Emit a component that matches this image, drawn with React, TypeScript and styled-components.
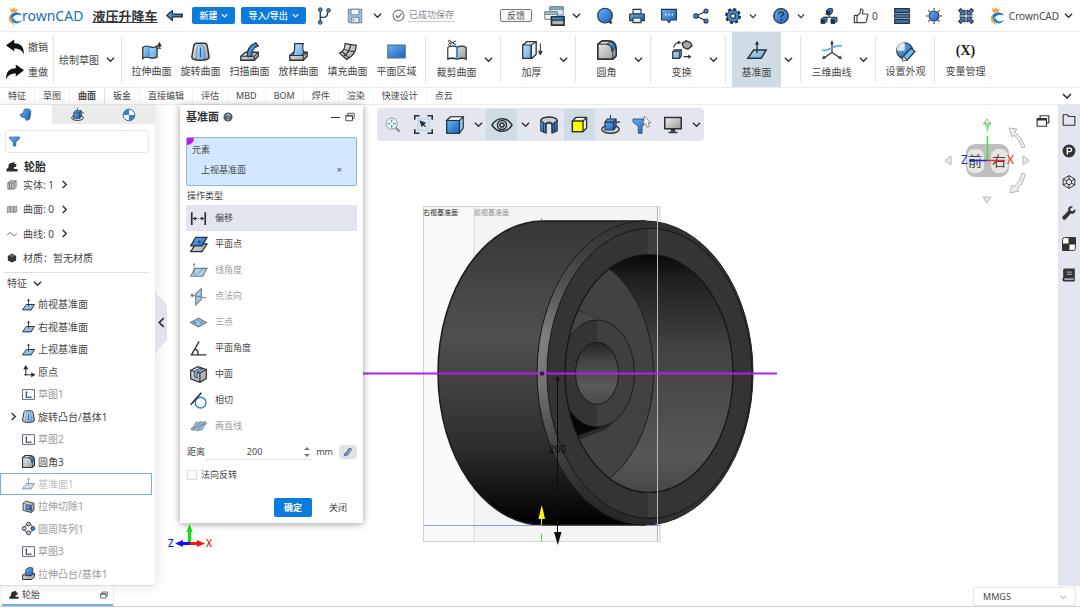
import React from "react";
import styled, { createGlobalStyle, css } from "styled-components";

const GlobalStyle = createGlobalStyle`
  *, *::before, *::after { box-sizing: border-box; }
  body {
    margin: 0;
    background: #fff;
    color: #484848;
    font-family: "Noto Sans", "Noto Sans CJK SC", sans-serif;
    font-size: 10px;
    line-height: 14px;
  }
  button, input, select {
    margin: 0;
    padding: 0;
    border: 0;
    background: none;
    color: inherit;
    font: inherit;
  }
  button { cursor: pointer; white-space: nowrap; }
  svg { display: block; flex: none; }
  h1, h2, p, ul { margin: 0; padding: 0; font: inherit; }
  ul { list-style: none; }
`;

/* ---------- icons ---------- */

const K = "#2c3138";
const B = "url(#blue)";
const L = "url(#lightBlue)";
const G = "url(#grey)";

const Gradients = () => (
  <svg width="0" height="0" aria-hidden="true">
    <defs>
      <linearGradient id="blue" x1="0" y1="0" x2="1" y2="1">
        <stop offset="0" stopColor="#64b4f2" />
        <stop offset="1" stopColor="#1c5fc0" />
      </linearGradient>
      <linearGradient id="lightBlue" x1="0" y1="0" x2="1" y2="1">
        <stop offset="0" stopColor="#c4e6fb" />
        <stop offset="1" stopColor="#5ba6e4" />
      </linearGradient>
      <linearGradient id="grey" x1="0" y1="0" x2="1" y2="1">
        <stop offset="0" stopColor="#eeeeee" />
        <stop offset="1" stopColor="#9b9b9b" />
      </linearGradient>
    </defs>
  </svg>
);

const plane = (
  <>
    <path d="M8 12h15l-6 10H1z" fill={L} stroke={K} strokeWidth="1.8" />
    <path d="M12 16V3" stroke={K} strokeWidth="1.6" />
    <path d="M9.500 5.500L12 1l2.500 4.500z" fill={K} />
  </>
);

const icons: Record<string, React.ReactNode> = {
  back: <path d="M1 12l8-7v5h14v4H9v5z" fill={B} stroke={K} strokeWidth="1.700" strokeLinejoin="round" />,
  branch: (
    <g fill="none" stroke={K} strokeWidth="1.800">
      <path d="M7 5v15M7 14c8 0 10-1 10-8" />
      <g fill="#3c8fdc" strokeWidth="1.200">
        <circle cx="7" cy="3.500" r="2.500" /><circle cx="7" cy="20.500" r="2.500" /><circle cx="18" cy="4.500" r="2.500" />
      </g>
    </g>
  ),
  save: (
    <g stroke="#7b8794" strokeWidth="1.600">
      <path d="M2 2h20v20H4l-2-2z" fill="#9cc3e6" />
      <path d="M6 2h12v8H6z" fill="#f2f5f8" /><path d="M7 14h11v8H7z" fill="#e6ebf0" /><path d="M10 16v4" />
    </g>
  ),
  check: (
    <g fill="none" stroke="#707a85" strokeWidth="2">
      <circle cx="12" cy="12" r="10" /><path d="M7 12l4 4 7-8" strokeWidth="2.500" />
    </g>
  ),
  windows: (
    <g stroke="#6d8190" strokeWidth="1.200">
      <path d="M7 1h16v10H7z" fill="#dbeaf3" /><path d="M7 1h16v3H7z" fill="#8fb6cc" />
      <path d="M1 7h15v9H1z" fill="#eef6fa" /><path d="M1 7h15v3H1z" fill="#a8cbdd" />
      <path d="M9 13h15v10H9z" fill="#b4b4b4" stroke={K} strokeWidth="2" /><path d="M9 13h15v4H9z" fill="#3d8fdc" stroke={K} strokeWidth="1.500" />
    </g>
  ),
  ball: (
    <>
      <path d="M17 18l5 5" stroke={K} strokeWidth="3.500" /><circle cx="12" cy="11.500" r="11" fill={B} stroke={K} strokeWidth="1.600" />
    </>
  ),
  print: (
    <g stroke={K} strokeWidth="1.700" strokeLinejoin="round">
      <path d="M6 2h12v7H6z" fill="#e9eef2" /><path d="M1 9h22v10H1z" fill={B} /><path d="M6 15h12v7H6z" fill="#e4e8ec" />
    </g>
  ),
  chat: (
    <>
      <path d="M1 2h22v16h-8l-3 4-3-4H1z" fill={B} stroke={K} strokeWidth="1.700" /><path d="M6 10h2M11 10h2M16 10h2" stroke="#fff" strokeWidth="2.400" />
    </>
  ),
  share: (
    <g stroke={K} strokeWidth="1.700">
      <path d="M19 5L5 12l14 7" fill="none" />
      <g fill="#3c8fdc"><circle cx="19.500" cy="4.500" r="3" /><circle cx="4.500" cy="12" r="3.300" /><circle cx="19.500" cy="19.500" r="3" /></g>
    </g>
  ),
  gear: (
    <g stroke={K}>
      <circle cx="12" cy="12" r="10" fill="none" strokeWidth="4" strokeDasharray="4.500 3.354" />
      <circle cx="12" cy="12" r="9" fill="#3a8edc" strokeWidth="1.500" />
      <circle cx="12" cy="12" r="3.600" fill="#fff" strokeWidth="1.800" />
    </g>
  ),
  help: (
    <>
      <circle cx="12" cy="12" r="11" fill={B} stroke={K} strokeWidth="1.800" />
      <path d="M8.500 9.500c0-5 7-4.500 7-.5 0 2.500-3.500 2.500-3.500 5" fill="none" stroke={K} strokeWidth="2" /><circle cx="12" cy="17.500" r="1.300" fill={K} />
    </>
  ),
  org: (
    <>
      <path d="M12 9v5M5 17v-3h14v3" fill="none" stroke={K} strokeWidth="1.600" />
      <g fill="#3583d6" stroke={K} strokeWidth="1.500">
        <path d="M8 4l3-3h6v6l-3 3H8z" /><path d="M0 17l3-3h6v6l-3 3H0z" /><path d="M15 17l3-3h6v6l-3 3h-6z" />
      </g>
      <path d="M8 4h6v6H8zM0 17h6v6H0zM15 17h6v6h-6z" fill={K} />
    </>
  ),
  thumb: (
    <path d="M2 11h4v11H2zM6 12l5-5V2.500c0-1.500 4-1.500 4 1.500 0 2-1 4-1 5h6.500c2 0 2 2 1.500 3l-2 8c-.5 1.500-1 2-2.500 2H6" fill="none" stroke="#444" strokeWidth="1.800" strokeLinejoin="round" />
  ),
  bars: (
    <g fill="#3279bd" stroke={K} strokeWidth="1.800">
      <path d="M1 1h22v5.500H1zM1 9.300h22v5.500H1zM1 17.500h22V23H1z" />
    </g>
  ),
  sun: (
    <g stroke={K} strokeWidth="1.600">
      <path d="M12 0v24M0 12h24M3.500 3.500l17 17M20.500 3.500l-17 17" /><circle cx="12" cy="12" r="8" fill={B} stroke="#fff" strokeWidth="2.500" />
      <circle cx="12" cy="12" r="7.500" fill={B} />
    </g>
  ),
  collapse: (
    <g fill="#3a86d2" stroke={K} strokeWidth="1.700" strokeLinejoin="round">
      <path d="M10.500 10.500V3L8 5 4 1 1 4l4 4-2 2.500z" /><path d="M13.500 10.500V3L16 5l4-4 3 3-4 4 2 2.500z" />
      <path d="M10.500 13.500V21L8 19l-4 4-3-3 4-4-2-2.500z" /><path d="M13.500 13.500V21l2.500-2 4 4 3-3-4-4 2-2.500z" />
    </g>
  ),
  crown: (
    <>
      <path d="M3-2l4 3 3-4 3 4 4-2-3 7H5z" fill="#f7a535" />
      <path d="M23 9C14 3 3 7 3 16c0 2 .5 4 2 6 1-7 5-11 11-12 3-.5 5 0 7 1z" fill="#1677c8" />
      <path d="M6 20c5 7 14 6 18-1-6 4-12 3-14-3-3 0-4 2-4 4z" fill="#1b86d6" />
      <path d="M2 12c-2 8 2 14 11 15C7 24 4 19 5 11z" fill="#f7a535" />
    </>
  ),
  undo: <path d="M0 9.500L11 2v5c8 0 13 4 13 15-2-5-6-8-13-8v4z" fill="#111" />,
  redo: <path d="M24 9.500L13 2v5C5 7 0 11 0 22c2-5 6-8 13-8v4z" fill="#111" />,
  extrude: (
    <>
      <path d="M1 7c6-6 10 4 18-2v14c-8 5-12-4-18 2z" fill={L} stroke={K} strokeWidth="1.700" /><path d="M3 7c3-3 5-2 7 0v11c-3-1-5-1-7 1z" fill={B} opacity=".5" />
      <path d="M19 8h5M22 2v6M20 5l2-4 2 4z" fill={K} stroke={K} strokeWidth="1.300" />
    </>
  ),
  revolve: (
    <>
      <path d="M7 1.500h10c2 0 3 1.500 3.500 3.500L23 19c0 2.500-5 4-11 4S1 21.500 1 19L3.500 5C4 3 5 1.500 7 1.500z" fill={G} stroke={K} strokeWidth="1.800" />
      <path d="M8 5c2-1.500 6-1.500 8 0l2 16c-4 1.500-8 1.500-12 0z" fill={L} stroke="#5d7f9e" /><path d="M12 7v12" stroke="#1c5fc0" strokeWidth="1.600" />
    </>
  ),
  sweep: (
    <>
      <path d="M1 18l6-5h16v5l-5 5H1z" fill={G} stroke={K} strokeWidth="1.700" /><path d="M1 18h17v5M18 18l5-5" fill="none" stroke={K} strokeWidth="1.300" />
      <path d="M9 17c0-9 4-13 11-16l3 4c-6 2-8 5-8 12-1 2-5 2-6 0z" fill={B} stroke={K} strokeWidth="1.600" />
    </>
  ),
  loft: (
    <>
      <path d="M1 17l5-4h17v5l-5 5H1z" fill={G} stroke={K} strokeWidth="1.700" /><path d="M1 17h17v6M18 17l5-4" fill="none" stroke={K} strokeWidth="1.300" />
      <path d="M7 2h11c-2 6 0 9 1 12l-3 3H5c2-5 3-9 2-15z" fill={L} stroke={K} strokeWidth="1.400" />
    </>
  ),
  fill: (
    <g stroke={K} strokeWidth="1.500">
      <path d="M9 2c5 1 9 2 14 2 0 9-4 14-12 18L2 14c5-2 7-6 7-12z" fill={G} /><path d="M16 3c-1 8-4 12-9 15M8 9c4 3 8 3 13 3M5 12l9 8" fill="none" />
    </g>
  ),
  region: <path d="M1 4h22v16H1z" fill={B} stroke="#4d6d8c" strokeWidth="1.400" />,
  trim: (
    <>
      <path d="M1 9c4-2 8-2 11 0 4-2 8-2 11 0v14c-4-2-8-1-11 0-3-1-7-2-11 0z" fill={G} stroke={K} strokeWidth="1.500" /><path d="M2 9c3-1 6-1 9 0v12c-3-1-6-1-9 0z" fill="#fff" />
      <path d="M12 7v16" stroke="#2e7fd6" strokeWidth="2" /><path d="M3 1l8 5M3 5l8-4" stroke={K} strokeWidth="1.200" />
      <circle cx="3" cy="1.500" r="1.300" fill="#fff" stroke={K} /><circle cx="3" cy="5.500" r="1.300" fill="#fff" stroke={K} />
    </>
  ),
  thicken: (
    <>
      <path d="M1 6l5-4h11v15l-5 5H1z" fill="#eceff1" stroke={K} strokeWidth="1.600" /><path d="M1 6h10v16H1z" fill={L} stroke={K} strokeWidth="1.300" />
      <path d="M11 6l6-4M11 22V6" stroke={K} strokeWidth="1.300" /><path d="M22 4v12M20 13.500l2 4.500 2-4.500z" stroke={K} strokeWidth="1.200" fill={K} />
    </>
  ),
  fillet: (
    <>
      <path d="M1 5l5-4h8c6 0 9 4 9 9v9l-4 4H1z" fill={G} stroke={K} strokeWidth="2" strokeLinejoin="round" />
      <path d="M12 5l4-3c4 1 6 4 6 8l-4 4c0-5-2-8-6-9z" fill={B} stroke={K} strokeWidth="1.200" /><path d="M1 5h11c5 1 7 5 7 9v9" fill="none" stroke={K} strokeWidth="1.200" />
    </>
  ),
  transform: (
    <>
      <path d="M1 14l2-2h8v7l-2 3H1z" fill={L} stroke={K} strokeWidth="1.600" /><path d="M1 14h8v8M9 14l2-2" fill="none" stroke={K} />
      <path d="M12 4l5-3 5 2 2 4-5 4-5-2z" fill="#aaa" stroke={K} strokeWidth="1.600" />
      <path d="M2 9c1-4 3-6 7-6M14 20h7" fill="none" stroke={K} strokeWidth="1.400" />
      <path d="M7 .5l4 2.500-4 2.500zM19.500 17.500l4 2.500-4 2.500z" fill={K} />
    </>
  ),
  plane,
  curve3d: (
    <>
      <path d="M12 2v13L3 21M12 15l9 6" fill="none" stroke={K} strokeWidth="1.500" /><path d="M10 5l2-5 2 5zM0 23l2-4.500 3 3.500zM24 23l-2-4.500-3 3.500z" fill={K} />
      <path d="M0 12c8 3 12-7 24-5" fill="none" stroke="#51b1ee" strokeWidth="2" />
    </>
  ),
  appearance: (
    <>
      <circle cx="11" cy="11" r="10" fill={B} stroke={K} strokeWidth="1.600" /><path d="M11 1v10H1C1 5 5 1 11 1z" fill="#dceaf4" />
      <path d="M9 18L19 8l5 4-10 11z" fill="#6ebcf0" stroke={K} strokeWidth="1.500" /><path d="M9 18l5 5-6 1z" fill="#fff" stroke={K} />
    </>
  ),
  part: (
    <>
      <path d="M2 12l6-3 2-7h9l3 4-2 14-6 3-4-6H5z" fill={B} stroke="#2d5d8f" strokeWidth="1.500" strokeLinejoin="round" />
      <path d="M14 5l5 3-1 13" fill="none" stroke="#2d5d8f" strokeWidth="1.300" />
    </>
  ),
  orbit: (
    <>
      <ellipse cx="12" cy="18" rx="11" ry="5" fill="#d5dbe0" stroke={K} strokeWidth="1.700" />
      <path d="M5 9l3-4h11v10l-3 4H5z" fill={B} stroke={K} strokeWidth="1.400" /><path d="M5 9h11v10M16 9l3-4M12 5V0M19 9h5" fill="none" stroke={K} strokeWidth="1.300" />
    </>
  ),
  globe: (
    <>
      <circle cx="12" cy="12" r="10" fill="#fff" stroke="#37577c" strokeWidth="1.500" /><path d="M12 2a10 10 0 0 0-10 10h10zM12 22a10 10 0 0 0 10-10H12z" fill="#2f7ed8" />
    </>
  ),
  funnel: <path d="M1 2h22v4l-8 7v9H9v-9L1 6z" fill={B} stroke="#35618f" strokeWidth="1.300" />,
  tire: <path d="M1 21v-5l4-3V8c2-5 8-4 12-6v4h4l-1 6h-4v4h7v5z" fill="#2e2e2e" />,
  cube: (
    <g fill="#c8c8c8" stroke="#666" strokeWidth="1.800"><path d="M2 7l5-5h15v15l-5 5H2z" /><path d="M2 7h15v15M17 7l5-5M6 7v15M11 7v15" fill="none" /></g>
  ),
  surface: <path d="M1 7c6-5 12 3 22-2v14c-9 4-15-3-22 2zM8 5v14M16 6v14" fill="#bbb" stroke="#666" strokeWidth="1.500" />,
  line: <path d="M1 15c5-10 9-5 11-2s6 6 11-3" fill="none" stroke="#555" strokeWidth="2" />,
  material: (
    <>
      <path d="M12 1l10 6v11l-10 5-10-5V7z" fill="#333" /><path d="M8 6l4 2 4-2" fill="none" stroke="#eee" strokeWidth="1.500" />
    </>
  ),
  origin: <path d="M7 20V5M4 7l3-5 3 5zM4 18h16M18 15l5 3-5 3z" fill={K} stroke={K} strokeWidth="2" />,
  sketch: (
    <g fill="none" stroke="#5d656d" strokeWidth="1.800"><path d="M1 3h22v18H1z" /><path d="M8 7v10h9" stroke="#333" strokeWidth="2" /><path d="M6 8h4M16 15v4" stroke="#2f7ed8" strokeWidth="2.500" /></g>
  ),
  cut: (
    <>
      <path d="M2 6l5-4 15 4v13l-5 4-15-4z" fill={G} stroke={K} strokeWidth="1.700" /><path d="M7 9l10 2v8L7 17z" fill={B} stroke={K} /><path d="M2 6l15 4v13M17 10l5-4" fill="none" stroke={K} />
    </>
  ),
  pattern: (
    <g stroke={K} strokeWidth="1.800" fill="#d0d4d8"><circle cx="12" cy="12" r="8" fill="none" /><circle cx="12" cy="4" r="3.500" /><circle cx="4" cy="12" r="3.500" /><circle cx="12" cy="20" r="3.500" /><circle cx="20" cy="12" r="3.500" fill="#3c8fdc" /></g>
  ),
  boss: (
    <>
      <path d="M1 15l5-3h17v6l-5 5H1z" fill={G} stroke={K} strokeWidth="1.800" /><path d="M7 13V5c2-4 10-5 13-3v10l-3 4H7z" fill={B} stroke={K} strokeWidth="1.500" /><path d="M1 16h17l5-4" fill="none" stroke={K} />
    </>
  ),
  offset: (
    <>
      <path d="M2.500 3v18M21.500 3v18" stroke={K} strokeWidth="2.400" /><path d="M4 12h16" stroke={K} strokeWidth="1.600" strokeDasharray="6 1.500 1 1.500" />
      <path d="M4 12l4-3v6zM20 12l-4-3v6z" fill={K} />
    </>
  ),
  planePoint: (
    <>
      <path d="M8 11h16l-7 11H1z" fill={G} stroke={K} strokeWidth="1.800" /><path d="M8 2h16l-7 12H1z" fill={B} stroke={K} strokeWidth="1.800" /><circle cx="13" cy="8" r="1.500" fill={K} />
    </>
  ),
  lineAngle: (
    <>
      <path d="M7 9h17l-6 11H1z" fill="#a9d3f1" stroke="#707a84" strokeWidth="1.500" /><path d="M6 18V3M8 18l11-8" fill="none" stroke="#707a84" /><circle cx="6" cy="3" r="1.300" fill="#707a84" />
    </>
  ),
  pointNormal: (
    <>
      <path d="M8 8l8-7v15l-8 8z" fill="#9accef" stroke="#707a84" strokeWidth="1.500" /><path d="M1 10l22 4M1 10l4-2M1 10l3 3" fill="none" stroke="#707a84" strokeWidth="1.500" />
    </>
  ),
  threePoint: (
    <>
      <path d="M1 12l11-6 11 6-11 6z" fill="#8fc6ee" stroke="#707a84" strokeWidth="1.700" /><path d="M6 12h2M15 12h2M12 10v-1" stroke="#37577c" strokeWidth="2" />
    </>
  ),
  angle: <path d="M13 2L2 21h21M7 13c3 1 5 4 4 8" fill="none" stroke={K} strokeWidth="1.900" />,
  midplane: (
    <g stroke={K} strokeWidth="1.700"><path d="M1 6l10-5 12 4v13l-9 5-13-5z" fill={G} /><path d="M1 6l13 4v13M14 10l9-5" fill="none" /><path d="M6 8l8-5 4 1-8 5v8l-4-2z" fill="#71baf0" strokeWidth="1.200" /></g>
  ),
  tangent: (
    <>
      <circle cx="15" cy="15" r="7.500" fill="none" stroke="#2f7ed8" strokeWidth="2" /><path d="M1 18L16 1" stroke={K} strokeWidth="2.400" />
    </>
  ),
  twoLine: (
    <>
      <path d="M8 6h15l-6 11H2z" fill="#8dbce0" stroke="#8b959e" strokeWidth="1.400" /><path d="M0 15l24-7M4 18L16 4M10 19L21 4" stroke="#7c8791" strokeWidth="1.300" />
    </>
  ),
  measure: (
    <>
      <path d="M6 21c-4 0-4-6 1-6l8-12 6 2-9 14z" fill="#3c8fdc" stroke={K} strokeWidth="1.500" /><path d="M9 20L20 4" stroke="#fff" strokeWidth="1.500" />
    </>
  ),
  infoHelp: (
    <>
      <circle cx="12" cy="12" r="11" fill="#58626d" /><path d="M8.500 9.500c0-5 7-4.500 7-.5 0 2.500-3.500 2.500-3.500 5" fill="none" stroke="#fff" strokeWidth="2" /><circle cx="12" cy="17.500" r="1.500" fill="#fff" />
    </>
  ),
  restore: <path d="M7 8V3h15v12h-4M2 8h16v13H2zM2 10h16" fill="none" stroke="#333" strokeWidth="2" />,
  zoomIn: (
    <>
      <path d="M15 15l7 7" stroke="#8e959b" strokeWidth="3.500" /><circle cx="10" cy="10" r="8.500" fill="#e9f4f4" stroke="#8e9da3" strokeWidth="1.500" /><path d="M10 4v4M10 12v4M4 10h4M12 10h4" stroke="#5b9d9d" strokeWidth="2" />
    </>
  ),
  fit: (
    <>
      <path d="M1 6V1h6M17 1h6v5M23 18v5h-6M7 23H1v-5" fill="none" stroke={K} strokeWidth="2" /><path d="M5 5h14v14H5z" fill="none" stroke="#76b7ea" strokeDasharray="2 1.500" />
      <path d="M8 8l6 2-4 4zM10 10l5 5" fill={K} stroke={K} strokeWidth="1.500" />
    </>
  ),
  blueCube: (
    <g stroke={K} strokeWidth="1.600"><path d="M1 6l5-5h17v15l-5 7H1z" fill="#8dd0f6" /><path d="M1 6l5-5h17l-5 5z" fill="#f2f4f5" /><path d="M1 6h17v17H1z" fill={B} /></g>
  ),
  eye: (
    <g fill="none" stroke={K} strokeWidth="1.800"><path d="M0 12c6-10 18-10 24 0-6 10-18 10-24 0z" /><circle cx="12" cy="12" r="5.500" /><circle cx="12" cy="12" r="2.500" /></g>
  ),
  section: (
    <g stroke={K} strokeWidth="1.400"><path d="M1 6c2-6 20-6 22 0v14l-7 3V12c-1-3-7-3-8 0v11l-7-3z" fill={B} /><path d="M1 6c2-6 20-6 22 0l-6 5c-2-4-8-4-10 0z" fill="#c9cdd1" /><path d="M8 11v11M16 11v11M4.500 9v12M19.500 9v12" /></g>
  ),
  yellowCube: (
    <g stroke={K} strokeWidth="1.900" strokeLinejoin="round"><path d="M2 7l5-5h15v15l-5 5H2z" fill="#f5f5d8" /><path d="M2 7h15v15H2z" fill="#ff0" /><path d="M17 7l5-5" /></g>
  ),
  funnelCursor: (
    <>
      <path d="M0 4h18v4l-6 6v9H7v-9L0 8z" fill={B} stroke="#37577c" strokeWidth="1.300" /><path d="M15 0l9 9h-4l2 5-3 1-2-5-3 3z" fill="#fff" stroke="#666" />
    </>
  ),
  monitor: (
    <>
      <path d="M1 2h22v15H1z" fill={G} stroke={K} strokeWidth="2" /><path d="M9 17h6v4H9z" fill={K} /><path d="M6 22h12" stroke={K} strokeWidth="2" />
    </>
  ),
  folder: <path d="M2 3h7l3 3h10v15H2z" fill="none" stroke="#333" strokeWidth="1.900" strokeLinejoin="round" />,
  parking: (
    <>
      <circle cx="12" cy="12" r="11" fill="#333" /><path d="M9 18V7h4.500c4 0 4 6 0 6H9" fill="none" stroke="#fff" strokeWidth="2.300" />
    </>
  ),
  hex: (
    <g fill="none" stroke="#333" strokeWidth="1.700"><path d="M12 1l10 6v10l-10 6-10-6V7z" /><circle cx="12" cy="12" r="4.500" /><path d="M12 1v6M12 17v6M2 7l6 3M16 14l6 3M22 7l-6 3M8 14l-6 3" /></g>
  ),
  wrench: <path d="M23 5l-5 4-3-1-1-3 5-4c-5-2-10 2-8 7L1 18c-2 3 2 7 5 5l9-10c6 1 9-3 8-8z" fill="#333" />,
  checker: (
    <g stroke="#333" strokeWidth="1.700"><rect x="1" y="1" width="22" height="22" rx="3" fill="#fff" /><path d="M12 1h11v11H12zM1 12h11v11H1z" fill="#333" /></g>
  ),
  book: (
    <>
      <path d="M4 1h18v22H4c-4 0-4-5-2-6V4c0-2 1-3 2-3z" fill="#333" /><path d="M4 19h16" stroke="#e3e6ee" strokeWidth="2" /><path d="M8 7h9M8 11h9" stroke="#999" strokeWidth="2" />
    </>
  ),
};

const Icon = ({ name, size = 16 }: { name: string; size?: number }) => (
  <svg width={size} height={size} viewBox="0 0 24 24" aria-hidden="true" overflow="visible">
    {icons[name]}
  </svg>
);

const turns = { down: 0, right: -90, left: 90 };
const Chevron = ({ dir = "down", size = 8, color = "#333" }: { dir?: keyof typeof turns; size?: number; color?: string }) => (
  <svg width={size} height={size} viewBox="0 0 10 10" aria-hidden="true">
    <path d="M1 3l4 4 4-4" fill="none" stroke={color} strokeWidth="1.600" transform={`rotate(${turns[dir]} 5 5)`} />
  </svg>
);

/* ---------- layout ---------- */

const Page = styled.div`
  display: flex;
  flex-direction: column;
  min-height: 100vh;
  overflow: hidden;
`;

const Row = styled.div<{ $gap?: number }>`
  display: flex;
  align-items: center;
  gap: ${(p) => p.$gap ?? 0}px;
`;

const TopBar = styled.header`
  display: flex;
  align-items: center;
  justify-content: space-between;
  height: 32px;
  padding: 0 7px 0 8px;
  border-bottom: 1px solid #ececee;
`;

const Logo = styled.div`
  display: flex;
  align-items: center;
  color: #1a6fb8;
  font-size: 14px;
  line-height: 20px;
`;

const DocTitle = styled.h1`
  font-size: 13px;
  font-weight: 700;
  line-height: 16px;
  color: #333;
  text-decoration: underline;
`;

const MenuButton = styled.button`
  display: flex;
  align-items: center;
  gap: 4px;
  height: 17px;
  padding: 0 7px;
  border-radius: 2px;
  background: #0c7bdc;
  color: #fff;
  font-size: 9px;
  font-weight: 500;
`;

const SavedNote = styled.span`
  padding: 0 1px;
  border-bottom: 1px solid #c9ccd0;
  color: #868b91;
  font-size: 9px;
  line-height: 12px;
`;

const FeedbackButton = styled.button`
  width: 32px;
  height: 13px;
  border: 1px solid #777;
  border-radius: 2px;
  font-size: 9px;
  line-height: 10px;
`;

const IconButton = styled.button`
  display: flex;
  align-items: center;
  justify-content: center;
  gap: 3px;
`;

const Ribbon = styled.nav`
  display: flex;
  align-items: stretch;
  height: 56px;
  border-bottom: 1px solid #ececee;
`;

const RibbonGroup = styled.div<{ $pad?: number; $last?: boolean }>`
  position: relative;
  display: flex;
  align-items: center;
  padding: 0 ${(p) => p.$pad ?? 0}px;
  &::after {
    content: "";
    display: ${(p) => (p.$last ? "none" : "block")};
    position: absolute;
    right: 0;
    top: 4px;
    bottom: 4px;
    border-right: 1px solid #e2e4e8;
  }
`;

const HistoryButton = styled.button`
  display: flex;
  align-items: center;
  gap: 4px;
  height: 25px;
`;

const Tool = styled.button<{ $active?: boolean; $tight?: boolean }>`
  display: flex;
  flex-direction: column;
  align-items: center;
  justify-content: center;
  gap: ${(p) => (p.$tight ? 3 : 5)}px;
  width: 49px;
  height: 55px;
  background: ${(p) => (p.$active ? "#cfdce6" : "transparent")};
`;

const ToolMore = styled.button`
  display: flex;
  justify-content: center;
  width: 14px;
`;

const VariableMark = styled.span`
  height: 20px;
  color: #222;
  font-family: "Liberation Serif", serif;
  font-size: 14px;
  font-weight: 700;
  line-height: 20px;
`;

const TabBar = styled.nav`
  display: flex;
  align-items: center;
  height: 17px;
  padding-right: 8px;
  border-bottom: 1px solid #ececee;
  & > :last-child { margin-left: auto; }
`;

const Tab = styled.button<{ $active?: boolean }>`
  height: 16px;
  padding: 0 8px;
  border-right: 1px solid ${(p) => (p.$active ? "#dfe1e5" : "#f4f4f6")};
  font-size: 9px;
  line-height: 14px;
  font-weight: ${(p) => (p.$active ? 700 : 400)};
`;

const Workspace = styled.main`
  display: flex;
  flex: 1;
`;

/* ---------- feature tree ---------- */

const Sidebar = styled.aside`
  position: relative;
  z-index: 1;
  display: flex;
  flex-direction: column;
  width: 155px;
  background: #fff;
  box-shadow: 2px 0 12px rgba(40, 40, 60, 0.12);
`;

const SideTabs = styled.div`
  display: grid;
  grid-template-columns: repeat(3, 1fr);
  height: 19px;
`;

const SideTab = styled(IconButton)<{ $active?: boolean }>`
  background: ${(p) => (p.$active ? "#fff" : "#ebebec")};
`;

const FilterBox = styled.label`
  display: flex;
  align-items: center;
  gap: 4px;
  height: 23px;
  margin: 6px 6px 6px 5px;
  padding: 0 3px;
  border: 1px solid #e6e6e9;
  border-radius: 3px;
  input { flex: 1; min-width: 0; outline: 0; }
`;

const PartName = styled.h2`
  display: flex;
  align-items: center;
  gap: 6px;
  height: 16px;
  padding-left: 6px;
  color: #333;
  font-size: 11px;
  font-weight: 700;
`;

const Stats = styled.div`
  display: grid;
  grid-template-rows: 19px 30px 19px 29px;
  margin: 0 6px 0 4px;
  border-bottom: 1px solid #dcdde0;
`;

const Stat = styled.button`
  display: flex;
  align-items: center;
  gap: 6px;
  padding-left: 3px;
  text-align: left;
`;

const Section = styled.button`
  display: flex;
  align-items: center;
  gap: 6px;
  height: 20px;
  padding-left: 7px;
`;

const Tree = styled.ul`
  display: flex;
  flex: 1;
  flex-direction: column;
  border-bottom: 1px solid #dcdde0;
`;

const TreeItem = styled.li<{ $dim?: boolean; $selected?: boolean }>`
  display: grid;
  grid-template-columns: 10px 13px 1fr;
  align-items: center;
  gap: 3px;
  flex: 1;
  min-height: 22px;
  margin-right: 3px;
  padding-left: 8px;
  border: 1px solid ${(p) => (p.$selected ? "#7db0de" : "transparent")};
  color: ${(p) => (p.$selected ? "#c0c0c0" : p.$dim ? "#9c9c9c" : "#484848")};
  svg { opacity: ${(p) => (p.$selected ? 0.5 : 1)}; }
`;

const CollapseHandle = styled.button`
  position: absolute;
  left: 100%;
  top: 50%;
  display: flex;
  align-items: center;
  justify-content: center;
  width: 12px;
  height: 62px;
  margin-top: -54px;
  background: #e1e4ed;
  clip-path: polygon(0 0, 100% 22%, 100% 78%, 0 100%);
`;

/* ---------- viewport ---------- */

const Viewport = styled.section`
  position: relative;
  flex: 1;
  min-width: 0;
`;

const Scene = styled.svg`
  position: absolute;
  inset: 0;
  width: 100%;
  height: 100%;
`;

const Panel = styled.form`
  position: absolute;
  left: 25px;
  top: 0;
  width: 183px;
  padding: 0 6px 6px;
  background: #fff;
  box-shadow: 0 1px 7px rgba(0, 0, 0, 0.4);
  font-size: 9px;
`;

const PanelHeader = styled.div`
  display: flex;
  align-items: center;
  justify-content: space-between;
  height: 24px;
  margin-bottom: 8px;
  padding-right: 2px;
`;

const PanelTitle = styled.h2`
  color: #333;
  font-size: 11px;
  font-weight: 700;
`;

const MinimizeButton = styled.button`
  width: 9px;
  height: 1px;
  background: #333;
`;

const Selection = styled.div`
  position: relative;
  display: flex;
  flex-direction: column;
  gap: 6px;
  height: 49px;
  padding: 5px 5px;
  border: 1px solid #98b5d2;
  border-radius: 2px;
  background: #d3e8fe;
  overflow: hidden;
  &::before {
    content: "";
    position: absolute;
    left: 0;
    top: 0;
    width: 7px;
    height: 7px;
    border-bottom-right-radius: 7px;
    background: #be16f2;
  }
`;

const Picked = styled.div`
  display: flex;
  justify-content: space-between;
  padding: 0 9px;
`;

const FieldTitle = styled.p`
  height: 19px;
  padding: 3px 1px 0;
`;

const Option = styled.button<{ $active?: boolean; $off?: boolean }>`
  display: flex;
  align-items: center;
  gap: 8px;
  width: 100%;
  height: 26px;
  padding-left: 4px;
  background: ${(p) => (p.$active ? "#e3e6ee" : "transparent")};
  color: ${(p) => (p.$off ? "#a0a0a0" : "#484848")};
`;

const DistanceRow = styled.div`
  display: flex;
  align-items: center;
  height: 26px;
  padding-left: 1px;
  label { flex: none; }
`;

const DistanceField = styled.div`
  display: flex;
  flex: 1;
  min-width: 0;
  height: 16px;
  margin-right: 3px;
  padding-right: 3px;
  border-bottom: 1px solid #e4e4e6;
  input { flex: 1; width: 0; min-width: 0; text-align: center; outline: 0; }
`;

const Spinner = styled.div`
  display: flex;
  flex-direction: column;
  justify-content: center;
  gap: 4px;
`;

const SpinButton = styled.button`
  width: 6px;
  height: 3px;
`;

const SquareButton = styled(IconButton)`
  width: 18px;
  height: 14px;
  margin-left: 6px;
  border-radius: 3px;
  background: #e4e4e6;
`;

const CheckRow = styled.label`
  display: flex;
  align-items: center;
  gap: 4px;
  height: 20px;
  padding-left: 1px;
  input {
    appearance: none;
    width: 10px;
    height: 10px;
    border: 1px solid #dcdce0;
    border-radius: 1px;
  }
`;

const PanelActions = styled.div`
  display: flex;
  justify-content: flex-end;
  gap: 7px;
  padding: 13px 0 0;
`;

const ActionButton = styled.button<{ $primary?: boolean }>`
  width: 38px;
  height: 19px;
  border-radius: 2px;
  ${(p) =>
    p.$primary &&
    css`
      background: #0c7bdc;
      color: #fff;
      font-weight: 700;
    `}
`;

const ViewTools = styled.div`
  position: absolute;
  left: 222px;
  top: 3px;
  display: flex;
  align-items: center;
  height: 33px;
  border-radius: 4px;
  background: #e3e6ee;
`;

const ViewTool = styled(IconButton)<{ $active?: boolean }>`
  width: 31px;
  height: 31px;
  background: ${(p) => (p.$active ? "#cfdce6" : "transparent")};
`;

const ViewMore = styled(IconButton)`
  width: 16px;
  height: 31px;
`;

const CubeArea = styled.div`
  position: absolute;
  top: 9px;
  right: 8px;
  display: flex;
  align-items: flex-start;
  gap: 6px;
`;

const SideRail = styled.nav`
  display: flex;
  flex-direction: column;
  align-items: center;
  gap: 17px;
  width: 22px;
  padding-top: 8px;
  background: #e3e6ee;
`;

const Footer = styled.footer`
  display: flex;
  justify-content: space-between;
  height: 21px;
  margin-bottom: 1px;
  padding: 0 4px 0 2px;
  border-bottom: 1px solid #cfd0d3;
`;

const FileTab = styled.button`
  display: flex;
  align-items: center;
  justify-content: space-between;
  width: 111px;
  padding: 0 5px 0 7px;
  border-bottom: 2px solid #77b0e9;
  box-shadow: 0 0 2px rgba(0, 0, 0, 0.2);
  font-size: 9px;
`;

const UnitBox = styled.label`
  position: relative;
  display: flex;
  align-items: center;
  width: 103px;
  height: 19px;
  margin-top: 1px;
  border: 1px solid #e6e6e9;
  border-radius: 2px;
  select {
    appearance: none;
    width: 100%;
    padding: 0 9px;
    outline: 0;
    font-size: 9px;
  }
  svg { position: absolute; right: 8px; pointer-events: none; }
`;

/* ---------- drawings ---------- */

const WheelScene = () => (
  <Scene viewBox="155 105 903 480" preserveAspectRatio="xMinYMin meet" role="img" aria-label="轮胎">
    <defs>
      <linearGradient id="tread" x1="0" y1="0" x2="0" y2="1">
        <stop offset="0" stopColor="#383637" />
        <stop offset=".2" stopColor="#454344" />
        <stop offset=".38" stopColor="#504f4f" />
        <stop offset=".5" stopColor="#464445" />
        <stop offset=".75" stopColor="#2d2c2c" />
        <stop offset=".93" stopColor="#0c0c0c" />
        <stop offset="1" stopColor="#000" />
      </linearGradient>
      <linearGradient id="rim" x1="0" y1="0" x2="0" y2="1">
        <stop offset="0" stopColor="#343233" />
        <stop offset=".2" stopColor="#575656" />
        <stop offset=".38" stopColor="#858484" />
        <stop offset=".55" stopColor="#757474" />
        <stop offset=".75" stopColor="#444" />
        <stop offset="1" stopColor="#1a1a1a" />
      </linearGradient>
      <linearGradient id="rimFade" x1="0" y1="0" x2="1" y2="0">
        <stop offset="0" stopColor="#333132" stopOpacity="0" />
        <stop offset=".5" stopColor="#333132" stopOpacity=".7" />
        <stop offset=".6" stopColor="#333132" />
      </linearGradient>
      <linearGradient id="bowl" x1="0" y1="0" x2="0" y2="1">
        <stop offset="0" stopColor="#080808" />
        <stop offset=".12" stopColor="#232222" />
        <stop offset=".4" stopColor="#444343" />
        <stop offset=".62" stopColor="#4d4b4c" />
        <stop offset=".85" stopColor="#585757" />
        <stop offset="1" stopColor="#484647" />
      </linearGradient>
      <linearGradient id="bore" x1="0" y1="0" x2="0" y2="1">
        <stop offset="0" stopColor="#262525" />
        <stop offset=".3" stopColor="#454444" />
        <stop offset=".7" stopColor="#5a5959" />
        <stop offset="1" stopColor="#4b4a4a" />
      </linearGradient>
      <linearGradient id="hub" x1="0" y1="0" x2="1" y2="0">
        <stop offset=".49" stopColor="#353334" />
        <stop offset=".51" stopColor="#403e3f" />
      </linearGradient>
      <clipPath id="opening"><ellipse cx="649" cy="373.500" rx="84" ry="119" /></clipPath>
    </defs>

    <path d="M423.500 206.500H660V541.500H423.500z" fill="#fafafa" stroke="#cfcfcf" />
    <path d="M474 206.500H657.500V541.500H474z" fill="#f4f4f4" stroke="#d6d6d6" />
    <text x="423" y="215" fontSize="7" fill="#222">右视基准面</text>
    <text x="474" y="215" fontSize="7" fill="#8c8c8c">前视基准面</text>
    <path d="M541.500 218v6M541.500 534v7" stroke="#35e035" />

    <path d="M645 221H543C485 221 438 289 438 373s47 152 105 152h102z" fill="url(#tread)" stroke="#1b1b1b" strokeWidth="1.500" />
    <ellipse cx="645" cy="373" rx="108" ry="152" fill="url(#rim)" stroke="#161616" />
    <ellipse cx="645" cy="373" rx="108" ry="152" fill="url(#rimFade)" />
    <ellipse cx="649.500" cy="373.300" rx="102.500" ry="145" fill="#353334" stroke="#171717" />
    <path d="M648 229h9v26h-9zM648 493h9v24h-9z" fill="#3f3d3e" />
    <ellipse cx="649" cy="373.500" rx="84" ry="119" fill="url(#bowl)" />
    <g clipPath="url(#opening)">
      <ellipse cx="569.500" cy="373.500" rx="84" ry="119" fill="#434142" stroke="#1e1e1e" />
      <path d="M566 328l12-18 19 10-28 20z" fill="#484647" />
      <path d="M578 310l8 3" stroke="#2a2a2a" />
      <path d="M568 410l29 17 16-3-38 13-9-4z" fill="#070707" />
      <path d="M574 437l39-14-8 7-30 11z" fill="#2a2929" />
      <ellipse cx="597" cy="373.500" rx="37.500" ry="53.500" fill="url(#hub)" stroke="#1b1b1b" />
      <ellipse cx="597" cy="373.300" rx="21.500" ry="31" fill="url(#bore)" stroke="#191919" />
    </g>
    <ellipse cx="649" cy="373.500" rx="84" ry="119" fill="none" stroke="#141414" strokeWidth="1.200" />

    <path d="M657.500 207v334" stroke="#b9b9b9" />
    <path d="M423.500 525.500H541M646 525.500h14" stroke="#8f9dd2" />
    <path d="M557.500 376v160" stroke="#0c0c0c" />
    <path d="M555.500 380.500l2-5 2 5zM554 532h7.500l-3.700 13z" fill="#0c0c0c" />
    <text x="549" y="453" fontSize="10" fill="#0a0a0a">200</text>
    <path d="M541.500 518v7" stroke="#e8e800" />
    <path d="M538.500 519h6.500l-3.200-14z" fill="#ff0" />
    <path d="M363 373.500h414" stroke="#b41ff0" strokeWidth="2" />
    <rect x="540" y="371.500" width="4" height="4" rx="1" fill="#3a1850" />

    <g strokeWidth="2" fontSize="10" fontWeight="500">
      <path d="M189.500 543v-12" stroke="#0fe00f" strokeWidth="3" /><path d="M186.500 532l3-8 3 8z" fill="#0fe00f" />
      <path d="M190 543.500h9" stroke="#f11" strokeWidth="3" /><path d="M197 540l8 3.500-8 3.500z" fill="#f11" />
      <path d="M190 543.500h-8" stroke="#11e" strokeWidth="3" /><path d="M183 540l-8 3.500 8 3.500z" fill="#11e" />
      <text x="168" y="547" fill="#11e">Z</text><text x="206" y="547" fill="#f11">X</text>
    </g>
  </Scene>
);

const ViewCube = () => (
  <svg width="86" height="92" viewBox="944 114 86 92" role="img" aria-label="视图方向">
    <rect x="966" y="144" width="43" height="33" rx="9" fill="#bebebe" />
    <rect x="967" y="149" width="17" height="24" rx="7" fill="#e6e6e6" />
    <rect x="991" y="149" width="17" height="24" rx="7" fill="#e6e6e6" />
    <g fill="#ececec" stroke="#b5b5b5">
      <path d="M983 124l4-5 4 5z" /><path d="M983 197h8l-4 6z" /><path d="M951 156v9l-6-4.500z" /><path d="M1023 156v9l6-4.500z" />
      <path d="M1009 128l8 1-2 3q8 7 10 15l-3 1q-2-8-8-13l-2 2z" /><path d="M1010 193l2-8 2 2q7-6 8-14l3 1q-1 9-8 15l2 2z" />
    </g>
    <text x="968" y="166" fontSize="14" fill="#444">前</text>
    <text x="992" y="166" fontSize="14" fill="#444">右</text>
    <path d="M987.500 160.500V136" stroke="#3be03b" strokeWidth="1.500" />
    <path d="M969 160.500h18" stroke="#22e" strokeWidth="1.500" />
    <path d="M987 160.500h18" stroke="#f22" strokeWidth="1.500" />
    <g fontSize="12">
      <text x="961" y="164" fill="#22e">Z</text><text x="1007" y="164" fill="#f22">X</text><text x="984" y="131" fill="#2be02b">Y</text>
    </g>
  </svg>
);

/* ---------- data ---------- */

const surfaceTools = [
  ["extrude", "拉伸曲面"], ["revolve", "旋转曲面"], ["sweep", "扫描曲面"],
  ["loft", "放样曲面"], ["fill", "填充曲面"], ["region", "平面区域"],
];
const menuTools = [
  ["trim", "裁剪曲面"], ["thicken", "加厚"], ["fillet", "圆角"],
  ["transform", "变换"], ["plane", "基准面"], ["curve3d", "三维曲线"],
];
const tabs = ["特征", "草图", "曲面", "钣金", "直接编辑", "评估", "MBD", "BOM", "焊件", "渲染", "快速设计", "点云"];

const features: { icon: string; label: string; dim?: boolean; selected?: boolean; open?: boolean }[] = [
  { icon: "plane", label: "前视基准面" },
  { icon: "plane", label: "右视基准面" },
  { icon: "plane", label: "上视基准面" },
  { icon: "origin", label: "原点" },
  { icon: "sketch", label: "草图1", dim: true },
  { icon: "revolve", label: "旋转凸台/基体1", open: true },
  { icon: "sketch", label: "草图2", dim: true },
  { icon: "fillet", label: "圆角3" },
  { icon: "plane", label: "基准面1", selected: true },
  { icon: "cut", label: "拉伸切除1", dim: true },
  { icon: "pattern", label: "圆周阵列1", dim: true },
  { icon: "sketch", label: "草图3", dim: true },
  { icon: "boss", label: "拉伸凸台/基体1", dim: true },
];

const operations: [string, string, boolean][] = [
  ["offset", "偏移", false], ["planePoint", "平面点", false], ["lineAngle", "线角度", true],
  ["pointNormal", "点法向", true], ["threePoint", "三点", true], ["angle", "平面角度", false],
  ["midplane", "中面", false], ["tangent", "相切", false], ["twoLine", "两直线", true],
];

const railIcons = ["folder", "parking", "hex", "wrench", "checker", "book"];

/* ---------- page ---------- */

const Header = () => (
  <TopBar>
    <Row $gap={9}>
      <Logo><Icon name="crown" size={14} />rownCAD</Logo>
      <DocTitle>液压升降车</DocTitle>
      <IconButton aria-label="返回"><Icon name="back" size={17} /></IconButton>
      <Row $gap={6}>
        <MenuButton>新建<Chevron color="#fff" size={7} /></MenuButton>
        <MenuButton>导入/导出<Chevron color="#fff" size={7} /></MenuButton>
      </Row>
      <Row $gap={14}>
        <IconButton aria-label="版本"><Icon name="branch" size={18} /></IconButton>
        <Row $gap={10}>
          <IconButton aria-label="保存"><Icon name="save" /></IconButton>
          <Chevron size={9} />
          <Row $gap={3}><Icon name="check" size={13} /><SavedNote>已成功保存</SavedNote></Row>
        </Row>
      </Row>
    </Row>
    <Row $gap={16}>
      <Row $gap={12}>
        <FeedbackButton>反馈</FeedbackButton>
        <Row $gap={8}><Icon name="windows" size={20} /><Chevron size={9} /></Row>
      </Row>
      {["ball", "print", "chat", "share"].map((n) => (
        <IconButton key={n} aria-label={n}><Icon name={n} /></IconButton>
      ))}
      {["gear", "help"].map((n) => (
        <Row key={n} $gap={8}><IconButton aria-label={n}><Icon name={n} /></IconButton><Chevron /></Row>
      ))}
      <IconButton aria-label="结构"><Icon name="org" /></IconButton>
      <IconButton><Icon name="thumb" />0</IconButton>
      {["bars", "sun", "collapse"].map((n) => (
        <IconButton key={n} aria-label={n}><Icon name={n} /></IconButton>
      ))}
      <Row $gap={5}><Icon name="crown" size={14} />CrownCAD<Chevron size={9} /></Row>
    </Row>
  </TopBar>
);

const ToolRibbon = () => (
  <Ribbon>
    <RibbonGroup $pad={6}>
      <div>
        <HistoryButton><Icon name="undo" size={18} />撤销</HistoryButton>
        <HistoryButton><Icon name="redo" size={18} />重做</HistoryButton>
      </div>
    </RibbonGroup>
    <RibbonGroup $pad={5}>
      <HistoryButton>绘制草图<ToolMore as="span"><Chevron size={9} /></ToolMore></HistoryButton>
    </RibbonGroup>
    <RibbonGroup $pad={5}>
      {surfaceTools.map(([icon, label]) => (
        <Tool key={label} $tight><Icon name={icon} size={19} />{label}</Tool>
      ))}
    </RibbonGroup>
    {menuTools.map(([icon, label]) => (
      <RibbonGroup key={label} $pad={6}>
        <Tool $active={label === "基准面"}><Icon name={icon} size={20} />{label}</Tool>
        <ToolMore aria-label={`${label}菜单`}><Chevron size={9} /></ToolMore>
      </RibbonGroup>
    ))}
    <RibbonGroup $pad={5}>
      <Tool $tight><Icon name="appearance" size={19} />设置外观</Tool>
    </RibbonGroup>
    <RibbonGroup $pad={6} $last>
      <Tool $tight><VariableMark>(X)</VariableMark>变量管理</Tool>
    </RibbonGroup>
  </Ribbon>
);

const FeatureTree = () => (
  <Sidebar>
    <SideTabs>
      <SideTab $active aria-label="零件"><Icon name="part" size={13} /></SideTab>
      <SideTab aria-label="显示"><Icon name="orbit" size={13} /></SideTab>
      <SideTab aria-label="外观"><Icon name="globe" size={14} /></SideTab>
    </SideTabs>
    <FilterBox><Icon name="funnel" size={11} /><input aria-label="筛选" /></FilterBox>
    <PartName><Icon name="tire" size={12} />轮胎</PartName>
    <Stats>
      <Stat><Icon name="cube" size={10} />实体: 1<Chevron dir="right" size={9} /></Stat>
      <Stat><Icon name="surface" size={10} />曲面: 0<Chevron dir="right" size={9} /></Stat>
      <Stat><Icon name="line" size={10} />曲线: 0<Chevron dir="right" size={9} /></Stat>
      <Stat><Icon name="material" size={10} />材质：暂无材质</Stat>
    </Stats>
    <Section>特征<Chevron size={9} /></Section>
    <Tree>
      {features.map((f) => (
        <TreeItem key={f.label} $dim={f.dim} $selected={f.selected}>
          {f.open ? <Chevron dir="right" size={9} /> : <span />}
          <Icon name={f.icon} size={13} />
          {f.label}
        </TreeItem>
      ))}
    </Tree>
    <CollapseHandle aria-label="收起"><Chevron dir="left" size={11} /></CollapseHandle>
  </Sidebar>
);

const PlanePanel = () => (
  <Panel onSubmit={(e) => e.preventDefault()}>
    <PanelHeader>
      <Row $gap={4}><PanelTitle>基准面</PanelTitle><Icon name="infoHelp" size={10} /></Row>
      <Row $gap={5}>
        <MinimizeButton type="button" aria-label="最小化" />
        <IconButton type="button" aria-label="还原"><Icon name="restore" size={10} /></IconButton>
      </Row>
    </PanelHeader>
    <Selection>
      <span>元素</span>
      <Picked>上视基准面<button type="button" aria-label="移除">×</button></Picked>
    </Selection>
    <FieldTitle>操作类型</FieldTitle>
    {operations.map(([icon, label, off], i) => (
      <Option type="button" key={label} $active={i === 0} $off={off} disabled={off}>
        <Icon name={icon} size={17} />{label}
      </Option>
    ))}
    <DistanceRow>
      <label htmlFor="distance">距离</label>
      <DistanceField>
        <input id="distance" defaultValue="200" />
        <Spinner>
          <SpinButton type="button" aria-label="增加">
            <svg width="6" height="3" viewBox="0 0 6 3"><path d="M0 3l3-3 3 3z" fill="#777" /></svg>
          </SpinButton>
          <SpinButton type="button" aria-label="减少">
            <svg width="6" height="3" viewBox="0 0 6 3"><path d="M0 0l3 3 3-3z" fill="#777" /></svg>
          </SpinButton>
        </Spinner>
      </DistanceField>
      mm
      <SquareButton type="button" aria-label="测量"><Icon name="measure" size={10} /></SquareButton>
    </DistanceRow>
    <CheckRow><input type="checkbox" />法向反转</CheckRow>
    <PanelActions>
      <ActionButton $primary>确定</ActionButton>
      <ActionButton type="button">关闭</ActionButton>
    </PanelActions>
  </Panel>
);

const ViewToolbar = () => (
  <ViewTools>
    <ViewTool aria-label="放大"><Icon name="zoomIn" /></ViewTool>
    <ViewTool aria-label="适合窗口"><Icon name="fit" size={19} /></ViewTool>
    <ViewTool aria-label="显示样式"><Icon name="blueCube" size={18} /></ViewTool>
    <ViewMore aria-label="显示样式菜单"><Chevron size={9} /></ViewMore>
    <ViewTool $active aria-label="可见性"><Icon name="eye" size={20} /></ViewTool>
    <ViewMore aria-label="可见性菜单"><Chevron size={9} /></ViewMore>
    <ViewTool aria-label="剖视"><Icon name="section" size={18} /></ViewTool>
    <ViewTool $active aria-label="透视"><Icon name="yellowCube" size={17} /></ViewTool>
    <ViewTool aria-label="旋转"><Icon name="orbit" size={19} /></ViewTool>
    <ViewTool aria-label="选择过滤"><Icon name="funnelCursor" size={18} /></ViewTool>
    <ViewTool aria-label="屏幕"><Icon name="monitor" size={18} /></ViewTool>
    <ViewMore aria-label="屏幕菜单"><Chevron size={9} /></ViewMore>
  </ViewTools>
);

export default function App() {
  return (
    <Page>
      <GlobalStyle />
      <Gradients />
      <Header />
      <ToolRibbon />
      <TabBar>
        {tabs.map((t) => <Tab key={t} $active={t === "曲面"}>{t}</Tab>)}
        <IconButton aria-label="收起功能区"><Chevron size={10} /></IconButton>
      </TabBar>
      <Workspace>
        <FeatureTree />
        <Viewport>
          <WheelScene />
          <ViewToolbar />
          <PlanePanel />
          <CubeArea>
            <ViewCube />
            <IconButton aria-label="还原窗口"><Icon name="restore" size={14} /></IconButton>
          </CubeArea>
        </Viewport>
        <SideRail>
          {railIcons.map((n) => (
            <IconButton key={n} aria-label={n}><Icon name={n} size={14} /></IconButton>
          ))}
        </SideRail>
      </Workspace>
      <Footer>
        <FileTab><Row $gap={3}><Icon name="tire" size={10} />轮胎</Row><Icon name="restore" size={8} /></FileTab>
        <UnitBox>
          <select aria-label="单位"><option>MMGS</option></select>
          <Chevron color="#c4c4c8" />
        </UnitBox>
      </Footer>
    </Page>
  );
}
